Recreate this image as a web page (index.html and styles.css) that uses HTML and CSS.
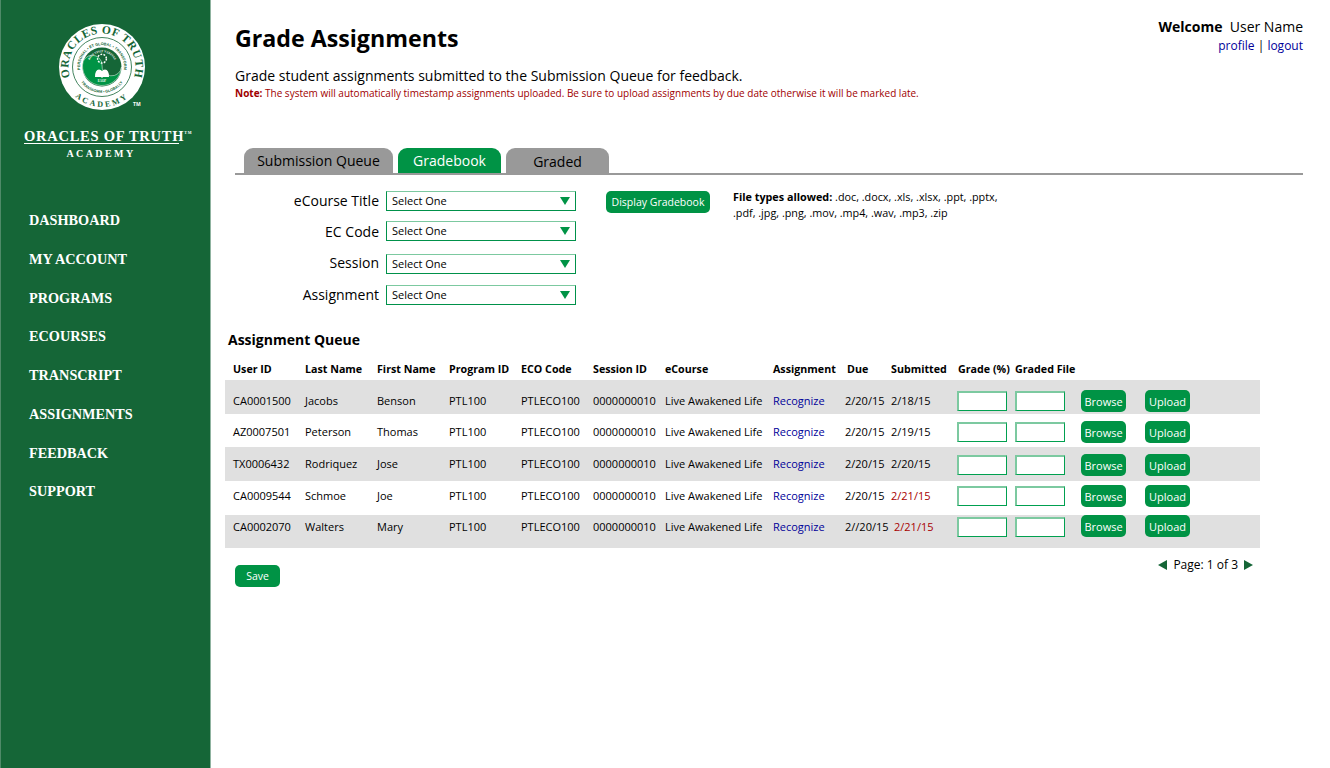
FILE: index.html
```html
<!DOCTYPE html>
<html lang="en">
<head>
    <meta charset="UTF-8">
    <title>Grade Assignments</title>
    <link rel="stylesheet" href="styles.css">
</head>
<body>
    <div class="sidebar">
        <div class="logo">
            <svg class="seal" width="90" height="90" viewBox="0 0 90 90">
                <defs>
                    <path id="arc-top" d="M 14.6 59.2 A 33.5 33.5 0 1 1 75.4 59.2"></path>
                    <path id="arc-bottom" d="M 10.4 65 A 40 40 0 0 0 79.6 65"></path>
                    <path id="arc-inner" d="M 25 54.3 A 22 22 0 1 1 65 54.3"></path>
                    <path id="arc-inner-bottom" d="M 22.5 58 A 26 26 0 0 0 67.5 58"></path>
                    <path id="arc-core" d="M 31.5 48 A 14 14 0 1 1 58.5 48"></path>
                </defs>
                <circle cx="45" cy="45" r="43" fill="#fff"></circle>
                <circle cx="45" cy="45" r="29.5" fill="#fff" stroke="#156637" stroke-width="0.8"></circle>
                <circle cx="45" cy="45" r="19.5" fill="#156637"></circle>
                <path d="M 25.5 43 A 9.75 9.75 0 0 1 45 43 A 9.75 9.75 0 0 0 64.5 45 A 19.5 19.5 0 0 1 25.5 43 Z" fill="#009345" stroke="#fff" stroke-width="0.5"></path>
                <circle cx="45" cy="36.7" r="4.4" fill="none" stroke="#fff" stroke-width="1.5" stroke-dasharray="1.8 1.3"></circle>
                <path d="M 38 55 Q 38 47.5 42 47.5 Q 44 47.5 45 49 Q 46 47.5 48 47.5 Q 52 47.5 52 55 L 46 55 L 45 56 L 44 55 Z" fill="#fff"></path>
                <text class="seal-big"><textPath href="#arc-top" startOffset="50%" text-anchor="middle">ORACLES OF TRUTH</textPath></text>
                <text class="seal-big seal-academy"><textPath href="#arc-bottom" startOffset="50%" text-anchor="middle">ACADEMY</textPath></text>
                <text class="seal-small"><textPath href="#arc-inner" startOffset="50%" text-anchor="middle">PERSONAL • ET GLOBAL • TRANSFORM</textPath></text>
                <text class="seal-small"><textPath href="#arc-inner-bottom" startOffset="50%" text-anchor="middle">TRANSFORM • GLOBALLY</textPath></text>
                <text class="seal-core"><textPath href="#arc-core" startOffset="50%" text-anchor="middle">BIOS VIVIT VERITAS</textPath></text>
                <text class="seal-core" x="45" y="60" text-anchor="middle">EAOP</text>
            </svg>
            <span class="seal-tm">TM</span>
            <div class="brand">ORACLES OF TRUTH<sup>TM</sup></div>
            <div class="brand-sub">ACADEMY</div>
        </div>
        <ul class="nav">
            <li><a href="#">Dashboard</a></li>
            <li><a href="#">My Account</a></li>
            <li><a href="#">Programs</a></li>
            <li><a href="#">eCourses</a></li>
            <li><a href="#">Transcript</a></li>
            <li><a href="#">Assignments</a></li>
            <li><a href="#">Feedback</a></li>
            <li><a href="#">Support</a></li>
        </ul>
    </div>

    <div class="main">
        <div class="user-box">
            <div class="welcome"><b>Welcome</b>&nbsp; User Name</div>
            <div class="user-links"><a href="#">profile</a> | <a href="#">logout</a></div>
        </div>
        <h1>Grade Assignments</h1>
        <p class="intro">Grade student assignments submitted to the Submission Queue for feedback.</p>
        <p class="note"><b>Note:</b> The system will automatically timestamp assignments uploaded. Be sure to upload assignments by due date otherwise it will be marked late.</p>

        <div class="tabs">
            <a class="tab tab-1" href="#">Submission Queue</a>
            <a class="tab tab-2 active" href="#">Gradebook</a>
            <a class="tab tab-3" href="#">Graded</a>
        </div>

        <div class="filters">
            <div class="filter-fields">
                <div class="form-group">
                    <label>eCourse Title</label>
                    <div class="select">Select One</div>
                </div>
                <div class="form-group">
                    <label>EC Code</label>
                    <div class="select">Select One</div>
                </div>
                <div class="form-group">
                    <label>Session</label>
                    <div class="select">Select One</div>
                </div>
                <div class="form-group">
                    <label>Assignment</label>
                    <div class="select">Select One</div>
                </div>
            </div>
            <button class="btn btn-display">Display Gradebook</button>
            <p class="file-types"><b>File types allowed:</b> .doc, .docx, .xls, .xlsx, .ppt, .pptx,<br>.pdf, .jpg, .png, .mov, .mp4, .wav, .mp3, .zip</p>
        </div>

        <h2>Assignment Queue</h2>
        <div class="queue">
            <div class="row head">
                <span>User ID</span><span>Last Name</span><span>First Name</span><span>Program ID</span><span>ECO Code</span><span>Session ID</span><span>eCourse</span><span>Assignment</span><span>Due</span><span>Submitted</span><span>Grade (%)</span><span>Graded File</span>
            </div>
            <div class="row r1">
                <span>CA0001500</span><span>Jacobs</span><span>Benson</span><span>PTL100</span><span>PTLECO100</span><span>0000000010</span><span>Live Awakened Life</span><span><a href="#">Recognize</a></span><span>2/20/15</span><span>2/18/15</span><input type="text"><input type="text"><button class="btn">Browse</button><button class="btn">Upload</button>
            </div>
            <div class="row r2">
                <span>AZ0007501</span><span>Peterson</span><span>Thomas</span><span>PTL100</span><span>PTLECO100</span><span>0000000010</span><span>Live Awakened Life</span><span><a href="#">Recognize</a></span><span>2/20/15</span><span>2/19/15</span><input type="text"><input type="text"><button class="btn">Browse</button><button class="btn">Upload</button>
            </div>
            <div class="row r3">
                <span>TX0006432</span><span>Rodriquez</span><span>Jose</span><span>PTL100</span><span>PTLECO100</span><span>0000000010</span><span>Live Awakened Life</span><span><a href="#">Recognize</a></span><span>2/20/15</span><span>2/20/15</span><input type="text"><input type="text"><button class="btn">Browse</button><button class="btn">Upload</button>
            </div>
            <div class="row r4">
                <span>CA0009544</span><span>Schmoe</span><span>Joe</span><span>PTL100</span><span>PTLECO100</span><span>0000000010</span><span>Live Awakened Life</span><span><a href="#">Recognize</a></span><span>2/20/15</span><span class="late">2/21/15</span><input type="text"><input type="text"><button class="btn">Browse</button><button class="btn">Upload</button>
            </div>
            <div class="row r5">
                <span>CA0002070</span><span>Walters</span><span>Mary</span><span>PTL100</span><span>PTLECO100</span><span>0000000010</span><span>Live Awakened Life</span><span><a href="#">Recognize</a></span><span>2//20/15</span><span class="late shifted">2/21/15</span><input type="text"><input type="text"><button class="btn">Browse</button><button class="btn">Upload</button>
            </div>
        </div>

        <div class="queue-foot">
            <button class="btn btn-save">Save</button>
            <div class="pager"><i class="arrow-left"></i>Page: 1 of 3<i class="arrow-right"></i></div>
        </div>
    </div>
</body>
</html>
```

FILE: styles.css
```css
* {
    box-sizing: border-box;
}
html, body {
    height: 100%;
}
body {
    margin: 0;
    display: flex;
    font-family: "Open Sans", Arial, sans-serif;
    color: #000;
    background-color: #fff;
    overflow: hidden;
}
a {
    text-decoration: none;
    color: #000099;
}

/* sidebar */
.sidebar {
    width: 211px;
    flex: none;
    height: 768px;
    background-color: #156637;
    border-left: 1px solid #4f8a68;
    border-right: 1px solid #8fb3a0;
    color: #fff;
}
.logo {
    position: relative;
    padding-top: 22px;
    text-align: center;
}
.seal {
    display: block;
    margin-left: 56px;
}
.seal-big {
    font-family: "Liberation Serif", serif;
    font-weight: bold;
    font-size: 11.5px;
    letter-spacing: 0.5px;
    fill: #156637;
}
.seal-academy {
    font-size: 8px;
    letter-spacing: 2.4px;
}
.seal-small {
    font-family: "Liberation Sans", sans-serif;
    font-weight: bold;
    font-size: 3.8px;
    fill: #156637;
}
.seal-core {
    font-family: "Liberation Serif", serif;
    font-size: 3px;
    font-weight: bold;
    fill: #fff;
}
.seal-tm {
    position: absolute;
    left: 132px;
    top: 101px;
    font-size: 5px;
    font-weight: bold;
}
.brand {
    margin-top: 17px;
    margin-left: 23px;
    width: 155px;
    border-bottom: 1px solid #fff;
    font-family: "Liberation Serif", serif;
    font-size: 14.5px;
    font-weight: bold;
    letter-spacing: 0.75px;
    line-height: 14px;
    white-space: nowrap;
    text-align: left;
}
.brand sup {
    font-size: 4px;
    line-height: 0;
    vertical-align: 7px;
}
.brand-sub {
    margin-top: 4px;
    margin-right: 9px;
    font-family: "Liberation Serif", serif;
    font-size: 10px;
    font-weight: bold;
    letter-spacing: 2.4px;
    line-height: 12px;
}
.nav {
    list-style: none;
    margin: 48px 0 0;
    padding: 0;
}
.nav li {
    height: 38.75px;
    padding-left: 28px;
}
.nav a {
    color: #fff;
    font-family: "Liberation Serif", serif;
    font-size: 14.25px;
    font-weight: bold;
    line-height: 20px;
    text-transform: uppercase;
}

/* main */
.main {
    position: relative;
    flex: 1;
    padding: 23px 27px 0 14px;
}
.user-box {
    position: absolute;
    top: 17px;
    right: 27px;
    text-align: right;
}
.welcome {
    font-size: 14px;
    line-height: 19px;
}
.user-links {
    font-size: 12px;
    line-height: 18px;
    margin-top: 1px;
}
h1 {
    margin: 0 0 0 10px;
    font-size: 23.2px;
    line-height: 30px;
    font-weight: bold;
}
.intro {
    margin: 14px 0 0 10px;
    font-size: 14px;
    line-height: 17px;
}
.note {
    margin: 3px 0 0 10px;
    font-size: 10px;
    line-height: 13px;
    color: #a00000;
}
.tabs {
    display: flex;
    gap: 5px;
    height: 25px;
    margin: 48px 0 0 10px;
    padding-left: 9px;
    border-bottom: 2px solid #999;
    box-sizing: content-box;
}
.tab {
    height: 25px;
    border-radius: 9px 9px 0 0;
    background-color: #999;
    color: #000;
    font-size: 14px;
    line-height: 25px;
    text-align: center;
}
.tab-1 {
    width: 149px;
}
.tab-2 {
    width: 103px;
}
.tab-3 {
    width: 103px;
    line-height: 27px;
}
.tab.active {
    background-color: #009345;
    color: #fff;
}

/* filters */
.filters {
    display: flex;
    align-items: flex-start;
    margin-top: 16px;
}
.filter-fields {
    width: 351px;
}
.form-group {
    display: flex;
    align-items: center;
    justify-content: flex-end;
    height: 20px;
    margin-bottom: 10px;
}
.form-group:nth-child(2) {
    margin-bottom: 13px;
}
.form-group:nth-child(3) {
    margin-bottom: 11px;
}
.form-group label {
    margin-right: 7px;
    margin-bottom: 2px;
    font-size: 14px;
    white-space: nowrap;
}
.form-group:nth-child(2) label {
    margin-bottom: 0;
}
.form-group:nth-child(3) label {
    margin-bottom: 4px;
}
.select {
    position: relative;
    width: 190px;
    height: 20px;
    padding-left: 5px;
    border: 1px solid #00914a;
    border-top-color: #7cc9a0;
    font-size: 11px;
    line-height: 18px;
}
.select::after {
    content: "";
    position: absolute;
    right: 5px;
    top: 5px;
    border-left: 5px solid transparent;
    border-right: 5px solid transparent;
    border-top: 8px solid #009345;
}
.btn {
    width: 45px;
    height: 22px;
    padding: 0;
    border: none;
    border-radius: 5px;
    background-color: #009345;
    color: #fff;
    font-family: inherit;
    font-size: 11px;
    cursor: pointer;
}
.btn-display {
    width: 104px;
    margin-left: 30px;
    font-size: 10.5px;
}
.file-types {
    margin: -2px 0 0 23px;
    font-size: 10.8px;
    line-height: 16px;
}
h2 {
    margin: 15px 0 0 3px;
    font-size: 14px;
    line-height: 20px;
    font-weight: bold;
}

/* queue table */
.queue {
    width: 1035px;
    margin-top: 8px;
}
.row {
    display: grid;
    grid-template-columns: 80px 72px 72px 72px 72px 72px 108px 72px 46px 66px 58px 66px 64px 60px;
    align-items: center;
    font-size: 11px;
    white-space: nowrap;
}
.row > span {
    margin-bottom: 2px;
}
.row > span:first-child {
    padding-left: 8px;
}
.head {
    height: 22px;
    font-size: 10.7px;
    font-weight: bold;
}
.head > span {
    margin-bottom: 0;
}
.head > span:nth-child(9) {
    padding-left: 2px;
}
.head > span:nth-child(11) {
    padding-left: 1px;
}
.r1 {
    height: 34px;
    padding-top: 8px;
    background-color: #e0e0e0;
}
.r2 {
    height: 33px;
    padding-top: 3px;
}
.r3 {
    height: 34px;
    padding-top: 2px;
    background-color: #e0e0e0;
}
.r3 > span {
    margin-bottom: 4px;
}
.r4 {
    height: 34px;
    padding-bottom: 4px;
}
.r5 {
    height: 33px;
    padding-bottom: 11px;
    background-color: #e0e0e0;
}
.r5 .btn {
    margin-bottom: 2px;
}
.row input {
    width: 50px;
    height: 20px;
    padding: 0;
    background-color: #fff;
    border: 1px solid #00a050;
    border-top: 2px solid #7cc9a0;
    border-left: 2px solid #7cc9a0;
    border-radius: 0;
}
.late {
    color: #a80000;
}
.shifted {
    padding-left: 3px;
}
.queue-foot {
    display: flex;
    justify-content: space-between;
    width: 1035px;
    margin-top: 8px;
}
.btn-save {
    margin-left: 10px;
    margin-top: 9px;
    font-size: 10.5px;
}
.pager {
    display: flex;
    align-items: center;
    height: 17px;
    margin-right: 7px;
    font-size: 12px;
}
.arrow-left, .arrow-right {
    width: 0;
    height: 0;
    border-top: 5px solid transparent;
    border-bottom: 5px solid transparent;
}
.arrow-left {
    margin-right: 6px;
    border-right: 9px solid #156637;
}
.arrow-right {
    margin-left: 6px;
    border-left: 9px solid #156637;
}
```
